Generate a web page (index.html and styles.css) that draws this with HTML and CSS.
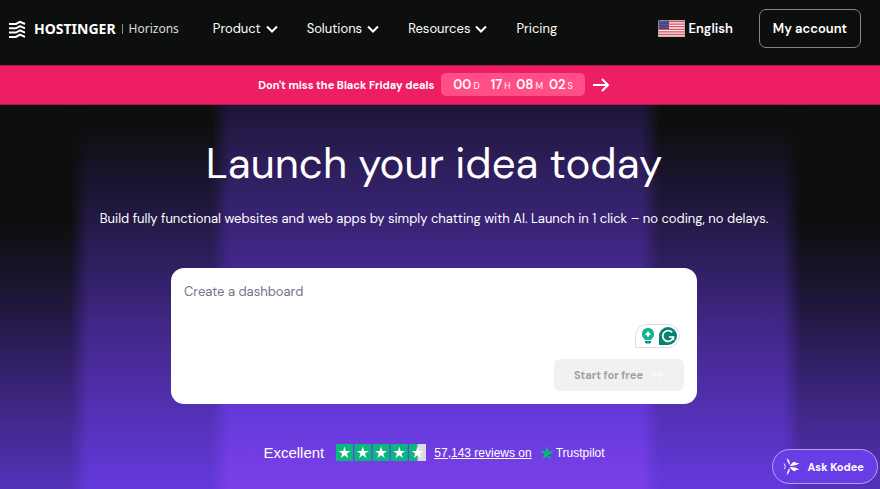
FILE: index.html
```html
<!DOCTYPE html>
<html lang="en">
<head>
  <meta charset="UTF-8">
  <meta name="viewport" content="width=device-width, initial-scale=1.0">
  <title>Hostinger Horizons</title>
  <link rel="stylesheet" href="styles.css">
</head>
<body>
  <header class="header">
    <a class="logo" href="#">
      <svg class="logo-icon" viewBox="0 0 18 18" aria-hidden="true">
        <path d="M1 4h7l4-2.200L17 4M1 8.300h7l4-2.200 5 2.200M1 12.600h7l4-2.200 5 2.200M1 16.900h7l4-2.200 5 2.200"/>
      </svg>
      <span class="logo-name">HOSTINGER</span>
      <span class="logo-line"></span>
      <span class="logo-product">Horizons</span>
    </a>
    <nav class="nav">
      <button class="nav-item">Product <svg class="chevron" viewBox="0 0 12 8"><path d="M1 1.500l5 5 5-5"/></svg></button>
      <button class="nav-item">Solutions <svg class="chevron" viewBox="0 0 12 8"><path d="M1 1.500l5 5 5-5"/></svg></button>
      <button class="nav-item">Resources <svg class="chevron" viewBox="0 0 12 8"><path d="M1 1.500l5 5 5-5"/></svg></button>
      <a class="nav-item" href="#">Pricing</a>
    </nav>
    <div class="header-right">
      <button class="language">
        <svg class="flag" viewBox="0 0 27 17" aria-hidden="true">
          <rect width="27" height="17" rx="1" fill="#f3eeee"/>
          <path d="M0 1.500h27M0 4.100h27M0 6.700h27M0 9.300h27M0 11.900h27M0 14.500h27" stroke="#d94f5f" stroke-width="1.300"/>
          <rect width="11" height="9" fill="#46467f"/>
          <path d="M1.500 2h9M1.500 4.500h9M1.500 7h9" stroke="#6d6d9e" stroke-dasharray="1 1"/>
          <rect x=".5" y=".5" width="26" height="16" rx="1" fill="none" stroke="#a9a3a8" stroke-opacity=".7"/>
        </svg>
        English
      </button>
      <a class="account" href="#">My account</a>
    </div>
  </header>

  <a class="banner" href="#">
    <span class="banner-text">Don't miss the Black Friday deals</span>
    <span class="timer">
      <span class="timer-days">00<small>D</small></span>
      <span>17<small>H</small></span>
      <span>08<small>M</small></span>
      <span>02<small>S</small></span>
    </span>
    <svg class="banner-arrow" viewBox="0 0 18 16" aria-hidden="true"><path d="M1 8h15M10 2l6 6-6 6"/></svg>
  </a>

  <main class="hero">
    <h1>Launch your idea today</h1>
    <p class="subtitle">Build fully functional websites and web apps by simply chatting with AI. Launch in 1 click – no coding, no delays.</p>

    <form class="prompt">
      <textarea class="prompt-input" aria-label="Describe your idea" placeholder="Create a dashboard"></textarea>
      <div class="assist">
        <svg class="bulb" viewBox="0 0 14 16" aria-hidden="true">
          <path d="M7 0a6 6 0 0 0-3.500 10.900V12h7v-1.100A6 6 0 0 0 7 0z" fill="#0fb392"/>
          <path d="M7 2.800 8.200 4.900 10.300 6.100 8.200 7.300 7 9.400 5.800 7.300 3.700 6.100 5.800 4.900z" fill="#fff"/>
          <path d="M4 13h6v1.200L9 15.500H5L4 14.200z" fill="#0a8f7a"/>
        </svg>
        <svg class="grammar" viewBox="0 0 18 18" aria-hidden="true">
          <path d="M9 0a9 9 0 1 1 0 18H0V9a9 9 0 0 1 9-9z" fill="#078272"/>
          <path d="M13.200 5.400A5.400 5.400 0 1 0 14.400 10H10M14.400 10v3" fill="none" stroke="#fff" stroke-width="1.700"/>
        </svg>
      </div>
      <button class="start" type="button" disabled>
        Start for free
        <svg class="start-arrow" viewBox="0 0 12 10" aria-hidden="true"><path d="M0 5h11M7 1l4 4-4 4"/></svg>
      </button>
    </form>

    <div class="rating">
      <span class="rating-word">Excellent</span>
      <svg class="stars" viewBox="0 0 90 17" role="img" aria-label="4.5 out of 5 stars">
        <defs>
          <path id="star" d="M8.500 2.600 9.900 7h4.500l-3.600 2.600 1.400 4.300-3.700-2.600-3.700 2.600 1.400-4.300L2.600 7h4.500z"/>
        </defs>
        <path fill="#0bb67f" d="M0 0h17v17H0zM18.250 0h17v17h-17zM36.500 0h17v17h-17zM54.750 0h17v17h-17zM73 0h8.500v17H73z"/>
        <path fill="#dcdce6" d="M81.500 0H90v17h-8.500z"/>
        <g fill="#fff">
          <use href="#star"/>
          <use href="#star" x="18.250"/>
          <use href="#star" x="36.500"/>
          <use href="#star" x="54.750"/>
          <use href="#star" x="73"/>
        </g>
      </svg>
      <a class="reviews" href="#">57,143 reviews on</a>
      <a class="trustpilot" href="#">
        <svg class="trust-star" viewBox="0 0 14 14" aria-hidden="true">
          <path fill="#04b67a" d="m7 0 1.700 5.200H14L9.700 8.400l1.600 5.200L7 10.400l-4.300 3.200 1.600-5.200L0 5.200h5.300z"/>
          <path fill="#0b6350" d="m9.700 8.400.5 1.400L7 10.400z"/>
        </svg>
        Trustpilot
      </a>
    </div>
  </main>

  <button class="kodee">
    <svg class="kodee-icon" viewBox="0 0 16 16" aria-hidden="true">
      <path d="M.5 4.500Q4.500 8 .5 11.500L1.800 8z"/>
      <path d="M3.500 0Q7 2.500 6.300 6.500 4 4.500 3.500 0zM3.500 16Q7 13.500 6.300 9.500 4 11.500 3.500 16z"/>
      <path d="M6.500 7.500Q9 3 12 3.500l-.5 1.200 4 .3Q12 8 6.500 7.500zM6.500 8.500Q9 13 12 12.500l-.5-1.200 4-.3Q12 8 6.500 8.500z"/>
    </svg>
    Ask Kodee
  </button>
</body>
</html>
```
FILE: styles.css
```css
* {
  box-sizing: border-box;
}
body {
  margin: 0;
  min-height: 100vh;
  display: flex;
  flex-direction: column;
  background: #0d0f0e;
  color: #fff;
  font-family: "DM Sans", Inter, sans-serif;
  font-size: 13px;
}
button {
  font: inherit;
  color: inherit;
  background: none;
  border: 0;
  padding: 0;
  cursor: pointer;
}
a {
  color: inherit;
  text-decoration: none;
}
svg {
  flex: none;
}

/* Header */
.header {
  display: flex;
  align-items: center;
  padding: 9px 19px 17px 8px;
}
.logo {
  display: flex;
  align-items: center;
  gap: 6px;
}
.logo-icon {
  width: 18px;
  height: 18px;
  margin-right: 2px;
  fill: none;
  stroke: #fff;
  stroke-width: 2;
}
.logo-name {
  font-family: "Noto Sans", sans-serif;
  font-weight: 700;
  font-size: 14px;
}
.logo-line {
  width: 1px;
  height: 10px;
  background: #8b8d8c;
}
.logo-product {
  font-family: "Noto Sans", sans-serif;
  font-size: 12px;
  color: #dcdddc;
}
.nav {
  display: flex;
  gap: 29px;
  margin-left: 34px;
}
.nav-item {
  display: flex;
  align-items: center;
  gap: 5px;
}
.chevron {
  width: 12px;
  height: 8px;
  fill: none;
  stroke: #fff;
  stroke-width: 2;
}
.header-right {
  display: flex;
  align-items: center;
  gap: 26px;
  margin-left: auto;
  font-weight: 600;
}
.language {
  display: flex;
  align-items: center;
  gap: 3px;
}
.flag {
  width: 27px;
  height: 17px;
}
.account {
  padding: 10px 13px;
  border: 1px solid #858786;
  border-radius: 7px;
}

/* Black Friday banner */
.banner {
  display: flex;
  justify-content: center;
  align-items: center;
  gap: 7px;
  padding: 7px 20px 8px 8px;
  background: #ee1e65;
  border-top: 1px solid #a81e4c;
  border-bottom: 1px solid #a81e4c;
  font-weight: 600;
}
.banner-text {
  font-size: 11px;
  font-weight: 700;
}
.timer {
  display: flex;
  gap: 6px;
  padding: 3px 12px;
  border-radius: 5px;
  background: #ff4f86;
}
.timer small {
  margin-left: 2px;
  font-size: 9px;
  font-weight: 400;
}
.timer-days {
  margin-right: 5px;
}
.banner-arrow {
  width: 18px;
  height: 16px;
  fill: none;
  stroke: #fff;
  stroke-width: 2;
}

/* Hero: three light columns, each one starts higher than the one outside it */
.hero {
  position: relative;
  z-index: 0;
  flex: 1;
  display: flex;
  flex-direction: column;
  align-items: center;
  padding: 31px 20px 26px 8px;
  background: linear-gradient(#0d0f0e 120px, #1d1636 190px, #2f1f60 250px, #5433bb 384px);
}
.hero::before,
.hero::after {
  content: "";
  position: absolute;
  z-index: -1;
  inset: 0 9% 0 8%;
  background: linear-gradient(#0d0f0e 20px, #1d1636 90px, #2f1f60 160px, #43288c 230px, #6439dd 384px);
  mask-image: linear-gradient(to right, transparent, #000 18px calc(100% - 18px), transparent);
}
.hero::after {
  inset: 0 25% 0 24%;
  background: linear-gradient(#1d1636, #2f1f60 70px, #43288c 165px, #6239d8 300px, #7c40ea 384px);
}
h1 {
  margin: 0;
  font-size: 42px;
  font-weight: 400;
  line-height: 56px;
}
.subtitle {
  margin: 18px 0 40px;
  line-height: 18px;
  text-align: center;
}
.prompt {
  display: flex;
  flex-direction: column;
  align-items: flex-end;
  width: 100%;
  max-width: 526px;
  padding: 13px;
  border-radius: 13px;
  background: #fff;
}
.prompt-input {
  width: 100%;
  height: 43px;
  padding: 2px 0;
  border: 0;
  outline: 0;
  resize: none;
  font: inherit;
  background: none;
}
.prompt-input::placeholder {
  color: #727586;
}
.assist {
  display: flex;
  align-items: center;
  gap: 4px;
  height: 24px;
  margin: 0 4px 11px 0;
  padding: 0 2px 0 5px;
  border: 1px solid #dcdce8;
  border-radius: 12px 12px 12px 0;
}
.bulb {
  width: 14px;
  height: 16px;
}
.grammar {
  width: 18px;
  height: 18px;
}
.start {
  display: flex;
  align-items: center;
  gap: 9px;
  height: 32px;
  padding: 0 20px;
  border-radius: 6px;
  background: #f1f1f2;
  color: #a0a0a6;
  font-size: 11px;
  font-weight: 700;
}
.start-arrow {
  width: 12px;
  height: 10px;
  fill: none;
  stroke: #fff;
  stroke-width: 1;
}
.rating {
  display: flex;
  align-items: center;
  gap: 8px;
  margin-top: 40px;
  font-family: "Liberation Sans", Arial, sans-serif;
  font-size: 12px;
}
.rating-word {
  margin-right: 4px;
  font-size: 15px;
}
.stars {
  width: 90px;
  height: 17px;
}
.reviews {
  text-decoration: underline;
}
.trustpilot {
  display: flex;
  align-items: center;
  gap: 2px;
}
.trust-star {
  width: 14px;
  height: 14px;
}

/* Chat button */
.kodee {
  position: fixed;
  right: 2px;
  bottom: 5px;
  z-index: 1;
  display: flex;
  align-items: center;
  gap: 8px;
  height: 35px;
  padding: 0 13px 0 10px;
  border: 1px solid #b7a0f4;
  border-radius: 18px;
  background: #673de6;
  font-size: 11px;
  font-weight: 700;
}
.kodee-icon {
  width: 17px;
  height: 17px;
  fill: #fff;
}
```
